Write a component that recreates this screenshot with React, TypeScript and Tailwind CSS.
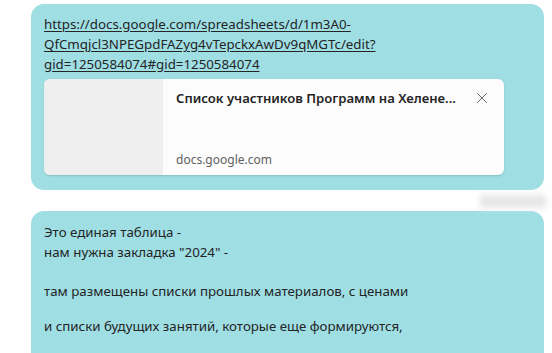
import { X } from 'lucide-react';

export default function App() {
  const font = { fontFamily: '"Noto Sans", "Open Sans", sans-serif' };

  return (
    <div className="relative w-[552px] h-[353px] overflow-hidden bg-white text-[#242424]" style={font}>
      <div className="flex flex-col gap-[21px] pt-1 pl-[31px] w-[544px]">
        {/* link message */}
        <div className="rounded-[13px] bg-[#9fdfe4] pt-[10px] pb-[15px] pl-[13px]">
          <a className="block text-[13.3px] leading-5 underline underline-offset-2 text-[#242424] w-[360px]">
            https://docs.google.com/spreadsheets/d/1m3A0-
            <br />
            QfCmqjcl3NPEGpdFAZyg4vTepckxAwDv9qMGTc/edit?
            <br />
            gid=1250584074#gid=1250584074
          </a>
          <div className="mt-[5px] flex w-[460px] h-[96px] rounded-md overflow-hidden bg-[#fcfcfc] shadow-[0_1px_2px_rgba(0,0,0,0.15)]">
            <div className="w-[119px] bg-[#efefef]" />
            <div className="flex-1 flex flex-col justify-between pl-[13px] pr-[13px] pt-[9px] pb-[7px]">
              <div className="flex items-center justify-between">
                <span className="text-[13.1px] font-semibold leading-5">Список участников Программ на Хелене...</span>
                <X size={18} strokeWidth={1.05} className="text-[#424242]" />
              </div>
              <span className="text-[12px] leading-4 text-[#616161]">docs.google.com</span>
            </div>
          </div>
        </div>

        {/* text message */}
        <div className="rounded-t-[13px] bg-[#9fdfe4] pt-[11px] pl-[13px] pb-6 text-[13.3px] leading-5">
          <p>Это единая таблица -</p>
          <p>нам нужна закладка "2024" -</p>
          <p className="h-[19px]" />
          <p>там размещены списки прошлых материалов, с ценами</p>
          <p className="h-[15px]" />
          <p>и списки будущих занятий, которые еще формируются,</p>
        </div>
      </div>

      {/* blurred timestamp */}
      <div className="absolute left-[480px] top-[195px] w-[66px] h-[13px] bg-[#e6e6e6] blur-[3px]" />
    </div>
  );
}
